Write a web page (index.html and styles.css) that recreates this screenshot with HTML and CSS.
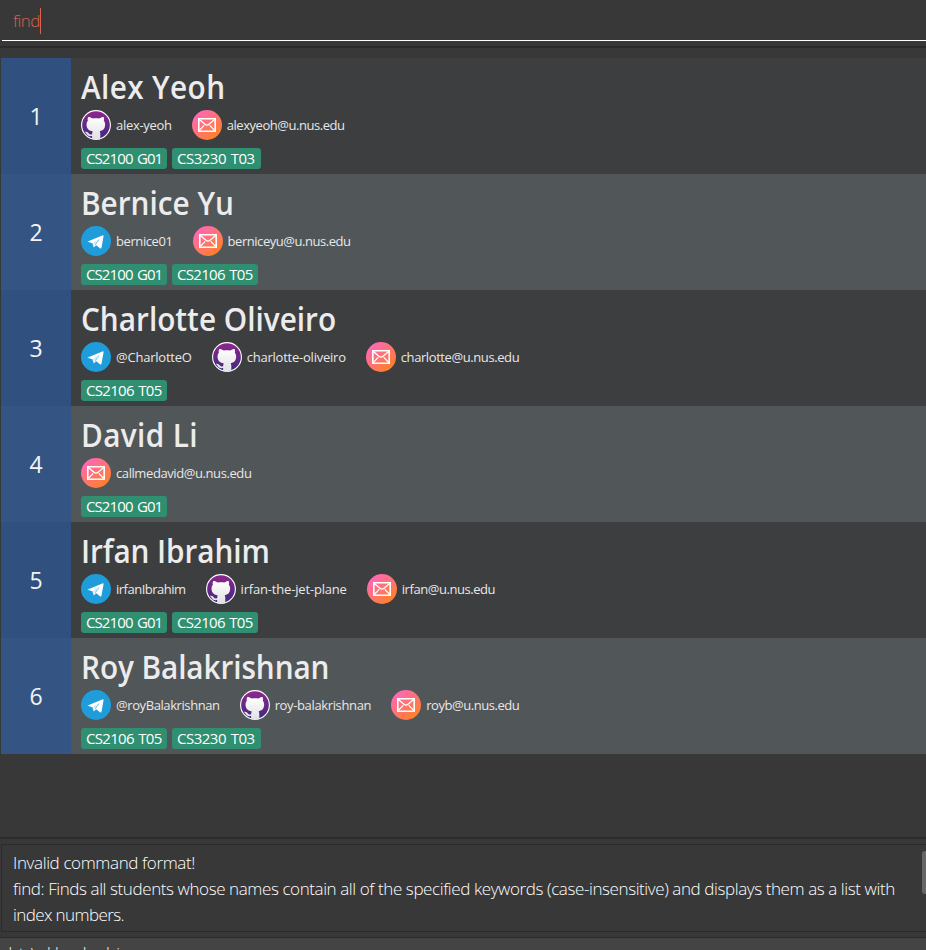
FILE: index.html
```
<!DOCTYPE html>
<html lang="en">
<head>
<meta charset="utf-8">
<title>Students</title>
<link rel="stylesheet" href="styles.css">
</head>
<body>
<svg class="defs" width="0" height="0" aria-hidden="true">
  <defs>
    <linearGradient id="purple" x1="0" y1="0" x2="0" y2="1"><stop offset="0" stop-color="#91268f"/><stop offset="1" stop-color="#3c2a80"/></linearGradient>
    <linearGradient id="sunset" x1="0.1" y1="0.1" x2="0.8" y2="0.95"><stop offset="0" stop-color="#ff66bd"/><stop offset="1" stop-color="#ff8126"/></linearGradient>
    <linearGradient id="silver" x1="0" y1="0" x2="0" y2="1"><stop offset="0" stop-color="#fff"/><stop offset="1" stop-color="#e0e0e4"/></linearGradient>
  </defs>
  <symbol id="github" viewBox="0 0 30 30">
    <circle cx="15" cy="15" r="14.4" fill="url(#purple)" stroke="#fff" stroke-width="1.1"/>
    <path fill="url(#silver)" d="M7.4 7c1.7 0 3 .7 4.2 1.5 2.1-.5 4.7-.5 6.8 0 1.2-.8 2.5-1.5 4.2-1.5.6 1.5.5 2.8.2 3.8 1.1 1.3 1.5 2.7 1.3 4.7-.3 3.6-2.2 5.2-5.4 5.7.4.7.6 1.6.6 2.8v5.2q-4.3 1.1-8.2 0v-3.1c-3.5.5-4.6-.6-5.4-2.1-.5-.9-1.3-1.5-1.8-2 1.9-.5 3.1.5 3.9 1.6.8 1.1 1.9 1.2 3.3.7.1-.8.2-2.2.6-2.9-3.5-.6-5.8-2.3-6.1-5.9-.2-2 .2-3.5 1.3-4.8-.5-1.5-.2-2.7.5-3.7z"/>
  </symbol>
  <symbol id="telegram" viewBox="0 0 30 30">
    <circle cx="15" cy="15" r="15" fill="#1f9ddb"/>
    <path fill="#fff" d="M6.7 15.4 21.4 9.4c.8-.3 1.3.1 1.1 1l-2 11.3c-.2.9-.8 1-1.5.5l-4.4-3.5 4-5.6-6.9 4.5-4.8-1.8c-.6-.2-.6-.3-.2-.4z"/>
    <path fill="#e4f3fb" d="m11.5 17.4.9 3.4c.1.5.5.6.9.3l1.9-1.9-1-.9 4.3-5.2z"/>
  </symbol>
  <symbol id="mail" viewBox="0 0 30 30">
    <circle cx="15" cy="15" r="15" fill="url(#sunset)"/>
    <path fill="none" stroke="#fff" stroke-width="1.6" d="M6.8 8.8h16.4v12.4H6.8z"/>
    <path fill="none" stroke="#fff" stroke-width="1.3" d="m7.4 9.6 5.8 4.8q1.8 1.3 3.6 0l5.8-4.8M7.4 20.4l4.8-5M22.6 20.4l-4.8-5"/>
  </symbol>
</svg>
<main class="window">
  <div class="command"><span class="command-text">find</span><i class="caret"></i></div>
  <div class="divider top"></div>
  <ol class="students">
    <li class="student"><div class="index">1</div><div class="details"><h2 class="n1">Alex Yeoh</h2>
      <div class="contacts"><div class="contact"><svg><use href="#github"/></svg><span class="c1">alex-yeoh</span></div><div class="contact"><svg><use href="#mail"/></svg><span class="c2">alexyeoh@u.nus.edu</span></div></div>
      <div class="tags"><span class="g">CS2100 G01</span><span class="wide">CS3230 T03</span></div></div></li>
    <li class="student"><div class="index">2</div><div class="details"><h2 class="n2">Bernice Yu</h2>
      <div class="contacts"><div class="contact"><svg><use href="#telegram"/></svg><span class="c3">bernice01</span></div><div class="contact"><svg><use href="#mail"/></svg><span class="c4">berniceyu@u.nus.edu</span></div></div>
      <div class="tags"><span class="g">CS2100 G01</span><span>CS2106 T05</span></div></div></li>
    <li class="student"><div class="index">3</div><div class="details"><h2 class="n3">Charlotte Oliveiro</h2>
      <div class="contacts"><div class="contact"><svg><use href="#telegram"/></svg><span class="c5">@CharlotteO</span></div><div class="contact"><svg><use href="#github"/></svg><span class="c6">charlotte-oliveiro</span></div><div class="contact"><svg><use href="#mail"/></svg><span class="c7">charlotte@u.nus.edu</span></div></div>
      <div class="tags"><span>CS2106 T05</span></div></div></li>
    <li class="student"><div class="index">4</div><div class="details"><h2 class="n4">David Li</h2>
      <div class="contacts"><div class="contact"><svg><use href="#mail"/></svg><span class="c8">callmedavid@u.nus.edu</span></div></div>
      <div class="tags"><span class="g">CS2100 G01</span></div></div></li>
    <li class="student"><div class="index">5</div><div class="details"><h2 class="n5">Irfan Ibrahim</h2>
      <div class="contacts"><div class="contact"><svg><use href="#telegram"/></svg><span class="c9">irfanIbrahim</span></div><div class="contact"><svg><use href="#github"/></svg><span class="c10">irfan-the-jet-plane</span></div><div class="contact"><svg><use href="#mail"/></svg><span class="c11">irfan@u.nus.edu</span></div></div>
      <div class="tags"><span class="g">CS2100 G01</span><span>CS2106 T05</span></div></div></li>
    <li class="student"><div class="index">6</div><div class="details"><h2 class="n6">Roy Balakrishnan</h2>
      <div class="contacts"><div class="contact"><svg><use href="#telegram"/></svg><span class="c12">@royBalakrishnan</span></div><div class="contact"><svg><use href="#github"/></svg><span class="c13">roy-balakrishnan</span></div><div class="contact"><svg><use href="#mail"/></svg><span class="c14">royb@u.nus.edu</span></div></div>
      <div class="tags"><span>CS2106 T05</span><span class="wide">CS3230 T03</span></div></div></li>
  </ol>
  <div class="divider"></div>
  <section class="result">
    <p class="m1">Invalid command format!</p>
    <p class="m2">find: Finds all students whose names contain all of the specified keywords (case-insensitive) and displays them as a list with</p>
    <p class="m3">index numbers.</p>
    <i class="scroll"></i>
  </section>
  <footer>data\addressbook.json</footer>
</main>
</body>
</html>
```
FILE: styles.css
```
* { box-sizing: border-box; }
html, body { margin: 0; height: 100%; overflow: hidden; }
body { background: #383838; font-family: "Open Sans", "Noto Sans", sans-serif; color: #fff; }
.defs { position: absolute; }
.window { display: flex; flex-direction: column; height: 950px; overflow: hidden; }

.command { display: flex; align-items: center; height: 41px; flex: none; margin-left: 2px; padding: 1px 0 0 11px; border-bottom: 1px solid #fff; color: #d6634a; font-size: 17px; font-weight: 300; }
.command-text { letter-spacing: -.55px; white-space: nowrap; width: 27px; }
.caret { width: 1px; height: 26px; background: #d6634a; }
.divider { height: 2px; flex: none; background: #2b2b2b; }
.divider.top { margin: 5px 0 10px; }

.students { list-style: none; margin: 0 0 0 1px; padding: 0; height: 779px; flex: none; }
.student { display: flex; height: 116px; background: #3c3e3f; }
.student:nth-child(even) { background: #515658; }
.index { width: 70px; display: grid; place-items: center; background: #30517f; font-size: 23px; font-weight: 500; padding-bottom: 1px; color: #f4f4f4; }
.student:nth-child(even) .index { background: #345584; }
.details { padding: 4px 0 0 10px; flex: 1; }
h2 { margin: 0; height: 48px; line-height: 49px; font-size: 32px; font-weight: 600; transform: scaleX(.93); transform-origin: 0 50%; color: #ececec; white-space: nowrap; }
.n1, .n4 { letter-spacing: .4px; }
.n5, .n6 { letter-spacing: -.1px; }
.contacts { display: flex; gap: 20px; height: 30px; }
.contact { display: flex; align-items: center; gap: 5px; font-size: 13px; color: #e8e8e8; }
.contact svg { width: 30px; height: 30px; flex: none; }
.contact span { white-space: nowrap; letter-spacing: -.3px; }
.contact .c2, .contact .c4, .contact .c14 { letter-spacing: -.45px; }
.contact .c9 { letter-spacing: -.5px; }
.contact .c3, .contact .c7, .contact .c8 { letter-spacing: -.41px; }
.contact .c11 { letter-spacing: -.44px; }
.contact .c5 { letter-spacing: -.22px; }
.contact .c6 { letter-spacing: -.23px; }
.contact .c10 { letter-spacing: -.18px; }
.contact .c12 { letter-spacing: -.41px; }
.contact .c13 { letter-spacing: -.36px; }
.tags { display: flex; gap: 5px; margin-top: 8px; }
.tags span { width: 86px; height: 21px; padding-left: 5px; border-radius: 3px; background: #2f8f70; font-size: 15px; line-height: 21px; letter-spacing: -.7px; word-spacing: 1.3px; white-space: nowrap; }
.tags .wide { width: 89px; letter-spacing: -.5px; }
.tags .g { letter-spacing: -.9px; }

.result { position: relative; margin: 5px -1px 5px 1px; height: 88px; border: 1px solid #2b2b2b; padding: 5px 0 0 11px; font-size: 17px; font-weight: 300; line-height: 26px; flex: none; }
.result p { margin: 0; white-space: nowrap; }
.m1 { letter-spacing: -.37px; }
.m2 { letter-spacing: -.405px; }
.m3 { letter-spacing: -.6px; }
.scroll { position: absolute; right: 0; top: 6px; width: 4px; height: 43px; background: #666; border-radius: 3px 0 0 3px; }
footer { height: 30px; flex: none; border-top: 1px solid #2b2b2b; background: #444; padding: 4px 0 0 4px; font-size: 13px; line-height: 20px; color: #ddd; letter-spacing: -.08px; }
```
